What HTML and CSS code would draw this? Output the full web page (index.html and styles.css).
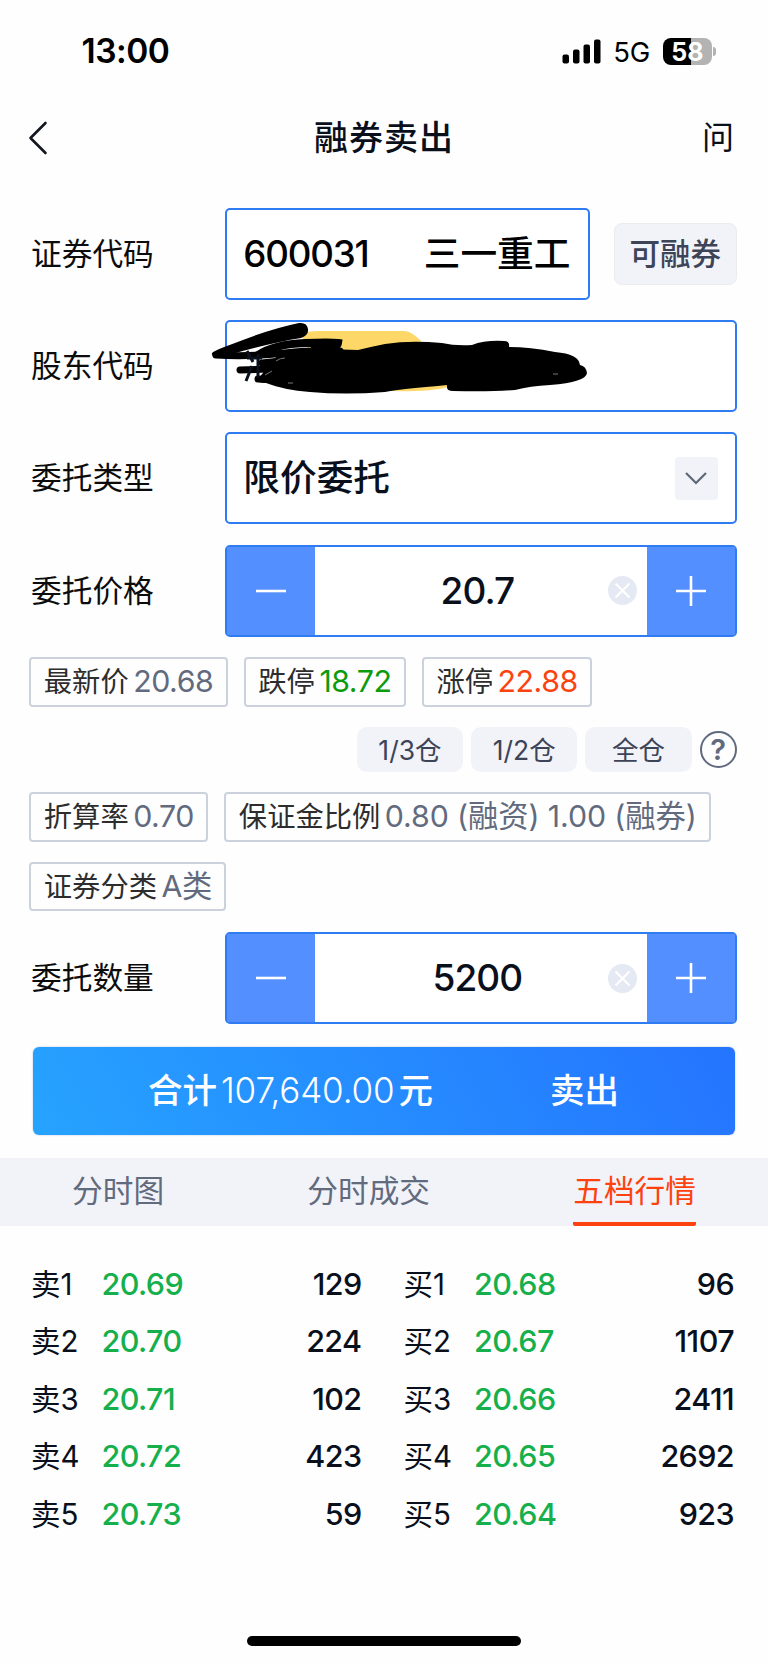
FILE: index.html
```html
<!DOCTYPE html>
<html lang="zh-CN">
<head>
    <meta charset="UTF-8">
    <meta name="viewport" content="width=device-width, initial-scale=1.0">
    <title>融券卖出</title>
    <link rel="stylesheet" href="styles.css">
</head>
<body>
    <!-- 状态栏 -->
    <div class="status-bar">
        <span class="time">13:00</span>
        <div class="status-icons">
            <svg class="signal" width="39" height="25" viewBox="0 0 39 25">
                <rect x="0.5" y="15.5" width="6.5" height="9" rx="2"/>
                <rect x="11" y="10.5" width="6.5" height="14" rx="2"/>
                <rect x="21.5" y="5.5" width="6.5" height="19" rx="2"/>
                <rect x="32" y="0.5" width="6.5" height="24" rx="2"/>
            </svg>
            <span class="network">5G</span>
            <div class="battery">58</div>
            <span class="battery-cap"></span>
        </div>
    </div>

    <!-- 标题栏 -->
    <div class="nav">
        <svg class="back" width="20" height="34" viewBox="0 0 20 34">
            <path d="M17.5 2 L2.5 17 L17.5 32"/>
        </svg>
        <h1 class="title">融券卖出</h1>
        <span class="ask">问</span>
    </div>

    <!-- 委托表单 -->
    <div class="form">
        <div class="row">
            <label class="label">证券代码</label>
            <div class="field code">
                <span class="number">600031</span>
                <span>三一重工</span>
            </div>
            <button class="lend">可融券</button>
        </div>
        <div class="row">
            <label class="label">股东代码</label>
            <div class="field">
                <svg class="scribble" width="400" height="92" viewBox="200 312 400 92">
                    <path class="marker" d="M300 334 Q308 331 318 331 H405 Q411 331 421 341 L452 385 Q440 392 395 391 L330 384 Z"/>
                    <path d="M212 353 Q215 350 235 343 Q270 329 299 323 Q307 322 308 329 Q309 335 301 338 Q270 343 225 356 Q211 359 212 353 Z"/>
                    <path class="pen thin" d="M216 355 Q250 357 285 353 Q310 350 340 351"/>
                    <path class="pen" d="M258 355 Q275 344 305 343 Q330 342 338 343 Q337 350 315 348"/>
                    <path class="pen thin" d="M240 370 L270 369 M258 379 L300 381 M262 363 L290 360"/>
                    <path class="ink" d="M247 351 L253 362 M252 366 L246 381 M258 354 V378 M247 358 H262"/>
                    <path d="M272 362 L258 379 Q257 383 266 383 Q284 390 310 392 Q345 395 385 392 Q400 389 438 386 L447 385 Q446 391 453 391 Q490 392 515 390 Q530 386 550 385 Q586 382 587 373 Q586 366 580 365 Q579 354 555 352 Q530 347 509 347 Q510 341 504 341 Q485 340 472 345 Q455 346 442 343 Q410 340 385 344 Q370 347 358 350 L325 349 L280 352 Z"/>
                    <path class="gap" d="M265 375 L272 371 M276 361 Q280 358 285 358 M288 383 H293 M553 374 H558"/>
                </svg>
            </div>
        </div>
        <div class="row">
            <label class="label">委托类型</label>
            <div class="field type">
                <span>限价委托</span>
                <span class="select">
                    <svg width="24" height="16" viewBox="0 0 24 16"><path d="M2 3 L12 13 L22 3"/></svg>
                </span>
            </div>
        </div>
        <div class="row">
            <label class="label">委托价格</label>
            <div class="field stepper">
                <button class="step"><svg width="30" height="30" viewBox="0 0 30 30"><path d="M0 15 H30"/></svg></button>
                <span class="value">20.7</span>
                <svg class="clear" width="29" height="29" viewBox="0 0 29 29"><circle cx="14.5" cy="14.5" r="14.5"/><path d="M7.5 7.5 L21.5 21.5 M21.5 7.5 L7.5 21.5"/></svg>
                <button class="step"><svg width="30" height="30" viewBox="0 0 30 30"><path d="M0 15 H30 M15 0 V30"/></svg></button>
            </div>
        </div>
    </div>

    <div class="tags">
        <div class="tag">最新价<span class="num">20.68</span></div>
        <div class="tag">跌停<span class="num down">18.72</span></div>
        <div class="tag">涨停<span class="num up">22.88</span></div>
    </div>

    <!-- 仓位 -->
    <div class="positions">
        <button class="position">1/3仓</button>
        <button class="position">1/2仓</button>
        <button class="position">全仓</button>
        <span class="help">?</span>
    </div>

    <div class="tags">
        <div class="tag">折算率<span class="num">0.70</span></div>
        <div class="tag">保证金比例<span class="num ratio">0.80 (融资) 1.00 (融券)</span></div>
        <div class="tag">证券分类<span class="num">A类</span></div>
    </div>

    <div class="row amount">
        <label class="label">委托数量</label>
        <div class="field stepper">
            <button class="step"><svg width="30" height="30" viewBox="0 0 30 30"><path d="M0 15 H30"/></svg></button>
            <span class="value">5200</span>
            <svg class="clear" width="29" height="29" viewBox="0 0 29 29"><circle cx="14.5" cy="14.5" r="14.5"/><path d="M7.5 7.5 L21.5 21.5 M21.5 7.5 L7.5 21.5"/></svg>
            <button class="step"><svg width="30" height="30" viewBox="0 0 30 30"><path d="M0 15 H30 M15 0 V30"/></svg></button>
        </div>
    </div>

    <button class="submit">
        <span class="total">合计<span class="sum">107,640.00</span>元</span>
        <span>卖出</span>
    </button>

    <!-- 行情 -->
    <div class="tabs">
        <div class="tab">分时图</div>
        <div class="tab">分时成交</div>
        <div class="tab active">五档行情</div>
    </div>

    <div class="quotes">
        <div class="side">
            <div class="quote"><span>卖1</span><span class="price">20.69</span><span class="volume">129</span></div>
            <div class="quote"><span>卖2</span><span class="price">20.70</span><span class="volume">224</span></div>
            <div class="quote"><span>卖3</span><span class="price">20.71</span><span class="volume">102</span></div>
            <div class="quote"><span>卖4</span><span class="price">20.72</span><span class="volume">423</span></div>
            <div class="quote"><span>卖5</span><span class="price">20.73</span><span class="volume">59</span></div>
        </div>
        <div class="side">
            <div class="quote"><span>买1</span><span class="price">20.68</span><span class="volume">96</span></div>
            <div class="quote"><span>买2</span><span class="price">20.67</span><span class="volume">1107</span></div>
            <div class="quote"><span>买3</span><span class="price">20.66</span><span class="volume">2411</span></div>
            <div class="quote"><span>买4</span><span class="price">20.65</span><span class="volume">2692</span></div>
            <div class="quote"><span>买5</span><span class="price">20.64</span><span class="volume">923</span></div>
        </div>
    </div>

    <div class="home-bar"></div>
</body>
</html>
```

FILE: styles.css
```css
* {
    box-sizing: border-box;
}

body {
    margin: 0;
    height: 1663px;
    display: flex;
    flex-direction: column;
    background: #fefefe;
    color: #0a0f1c;
    font-family: Inter, "Noto Sans CJK SC", sans-serif;
    overflow: hidden;
}

button {
    font-family: inherit;
    border: none;
    padding: 0;
}

/* 状态栏 */
.status-bar {
    height: 102px;
    flex: none;
    padding: 0 52px 0 81.5px;
    display: flex;
    align-items: center;
    justify-content: space-between;
    color: #000;
}

.time {
    font-size: 33.5px;
    font-weight: 600;
    letter-spacing: -0.5px;
}

.status-icons {
    display: flex;
    align-items: center;
}

.network {
    font-size: 27.5px;
    letter-spacing: -0.3px;
    margin: 2px 13px 0 12px;
}

.battery {
    width: 49px;
    height: 27px;
    border-radius: 8px;
    background: linear-gradient(to right, #000 58%, #b3b3b3 58%);
    color: #fff;
    font-size: 25px;
    font-weight: 700;
    line-height: 28px;
    text-align: center;
}

.battery-cap {
    width: 3px;
    height: 9px;
    margin-left: 1px;
    border-radius: 0 4px 4px 0;
    background: #b3b3b3;
}

/* 标题栏 */
.nav {
    height: 72px;
    flex: none;
    padding: 0 34px 0 28px;
    display: flex;
    align-items: center;
    justify-content: space-between;
    line-height: 70px;
}

.back path {
    fill: none;
    stroke: #14171f;
    stroke-width: 2.6;
    stroke-linecap: round;
    stroke-linejoin: round;
}

.title {
    margin: 0;
    padding-left: 18px;
    font-size: 34px;
    font-weight: 500;
    letter-spacing: 1px;
}

.ask {
    font-size: 32px;
}

/* 表单 */
.form {
    padding-top: 33.7px;
    display: flex;
    flex-direction: column;
    gap: 20.4px;
}

.row {
    display: flex;
    align-items: center;
    padding: 0 31.5px 0 31px;
}

.label {
    width: 194.3px;
    flex: none;
    font-size: 30.7px;
    line-height: 40px;
    color: #0c0c0c;
}

.field {
    position: relative;
    flex: 1;
    height: 92px;
    border: 2px solid #2f7bf2;
    border-radius: 5px;
    display: flex;
    align-items: center;
    justify-content: space-between;
    background: #fff;
    font-size: 36.7px;
    font-weight: 500;
    line-height: 86px;
}

.code {
    padding: 0 17px 0 16px;
    color: #000;
}

.number {
    letter-spacing: -1.2px;
}

.lend {
    width: 122.5px;
    height: 62px;
    margin-left: 24.5px;
    border: 1.5px solid #ebecef;
    border-radius: 8px;
    background: #f1f3f8;
    color: #3d4457;
    font-size: 30.5px;
    font-weight: 500;
    line-height: 58px;
}

/* 涂抹 */
.scribble {
    position: absolute;
    left: -27px;
    top: -10px;
}

.marker {
    fill: #fdd868;
}

.pen {
    fill: none;
    stroke: #000;
    stroke-width: 8;
    stroke-linecap: round;
}

.thin {
    stroke-width: 7;
}

.ink {
    fill: none;
    stroke: #0a0f1c;
    stroke-width: 3;
}

.gap {
    fill: none;
    stroke: #777;
    stroke-width: 1;
}

.type {
    padding: 0 17px 0 16px;
}

.select {
    width: 43px;
    height: 43px;
    border-radius: 4px;
    background: #f1f3f8;
    display: flex;
    align-items: center;
    justify-content: center;
}

.select path {
    fill: none;
    stroke: #606779;
    stroke-width: 2.2;
}

/* 加减 */
.stepper {
    background: #fff;
}

.step {
    width: 88px;
    height: 88px;
    flex: none;
    background: #538fff;
    display: flex;
    align-items: center;
    justify-content: center;
}

.step path {
    fill: none;
    stroke: #fff;
    stroke-width: 2.6;
}

.value {
    flex: 1;
    padding-left: 32px;
    text-align: center;
    font-size: 37px;
    letter-spacing: -0.9px;
}

.clear {
    margin-right: 10px;
    flex: none;
}

.clear circle {
    fill: #e5e9f3;
}

.clear path {
    fill: none;
    stroke: #fff;
    stroke-width: 2.2;
}

/* 标签 */
.tags {
    padding: 20.5px 29.3px 0;
    display: flex;
    flex-wrap: wrap;
    gap: 20px 16px;
}

.tag {
    height: 49.5px;
    padding: 0 12.5px;
    border: 2px solid #ccd2dd;
    border-radius: 4px;
    display: flex;
    align-items: baseline;
    font-size: 28.3px;
    line-height: 44px;
    color: #2d2d2d;
    white-space: nowrap;
}

.num {
    margin-left: 4.5px;
    font-size: 30.3px;
    letter-spacing: -0.45px;
    color: #626a7e;
}

.ratio {
    letter-spacing: -0.1px;
}

.down {
    color: #0c9b0c;
}

.up {
    color: #fb4310;
}

/* 仓位 */
.positions {
    padding: 20.5px 31.3px 0;
    display: flex;
    align-items: center;
    justify-content: flex-end;
    gap: 8px;
}

.position {
    width: 106.3px;
    height: 44.5px;
    border-radius: 10px;
    background: #f1f3f8;
    color: #3d4457;
    font-size: 26.5px;
    line-height: 44px;
}

.help {
    width: 37px;
    height: 37px;
    border: 2.4px solid #606a7e;
    border-radius: 50%;
    color: #606a7e;
    font-size: 29px;
    font-weight: 600;
    line-height: 33px;
    text-align: center;
}

.amount {
    margin-top: 21px;
}

/* 卖出按钮 */
.submit {
    width: 702px;
    height: 88px;
    flex: none;
    margin: 22.5px 0 0 33px;
    padding: 0 116px 0 115px;
    border-radius: 6px;
    background: linear-gradient(60deg, #26a3ff, #2574ff);
    box-shadow: 0 0 2px #a9bdd0;
    color: #fff;
    display: flex;
    align-items: center;
    justify-content: space-between;
    font-size: 34.5px;
    font-weight: 500;
    line-height: 86px;
}

.total {
    display: flex;
    align-items: baseline;
}

.sum {
    margin: 0 4px;
    font-weight: 300;
    font-size: 35px;
    letter-spacing: -0.15px;
}

/* 行情 */
.tabs {
    height: 68px;
    flex: none;
    margin-top: 23px;
    padding: 0 72px;
    display: flex;
    justify-content: space-between;
    background: #f1f3f8;
}

.tab {
    font-size: 30.7px;
    line-height: 66px;
    color: #626a7e;
}

.active {
    height: 68px;
    border-bottom: 4px solid #fe420f;
    border-radius: 2px;
    color: #fe420f;
}

.quotes {
    padding: 29px 34px 0 31px;
    display: flex;
    gap: 42px;
}

.side {
    width: 331px;
}

.quote {
    display: grid;
    grid-template-columns: 70.5px 1fr auto;
    height: 57.5px;
    align-items: baseline;
    font-size: 29.5px;
    line-height: 57.5px;
}

.price,
.volume {
    font-size: 30.5px;
    font-weight: 500;
    letter-spacing: -0.6px;
}

.price {
    color: #15b04c;
}

/* 底部横条 */
.home-bar {
    width: 274px;
    height: 10px;
    margin: auto auto 17px;
    border-radius: 5px;
    background: #000;
}
```
